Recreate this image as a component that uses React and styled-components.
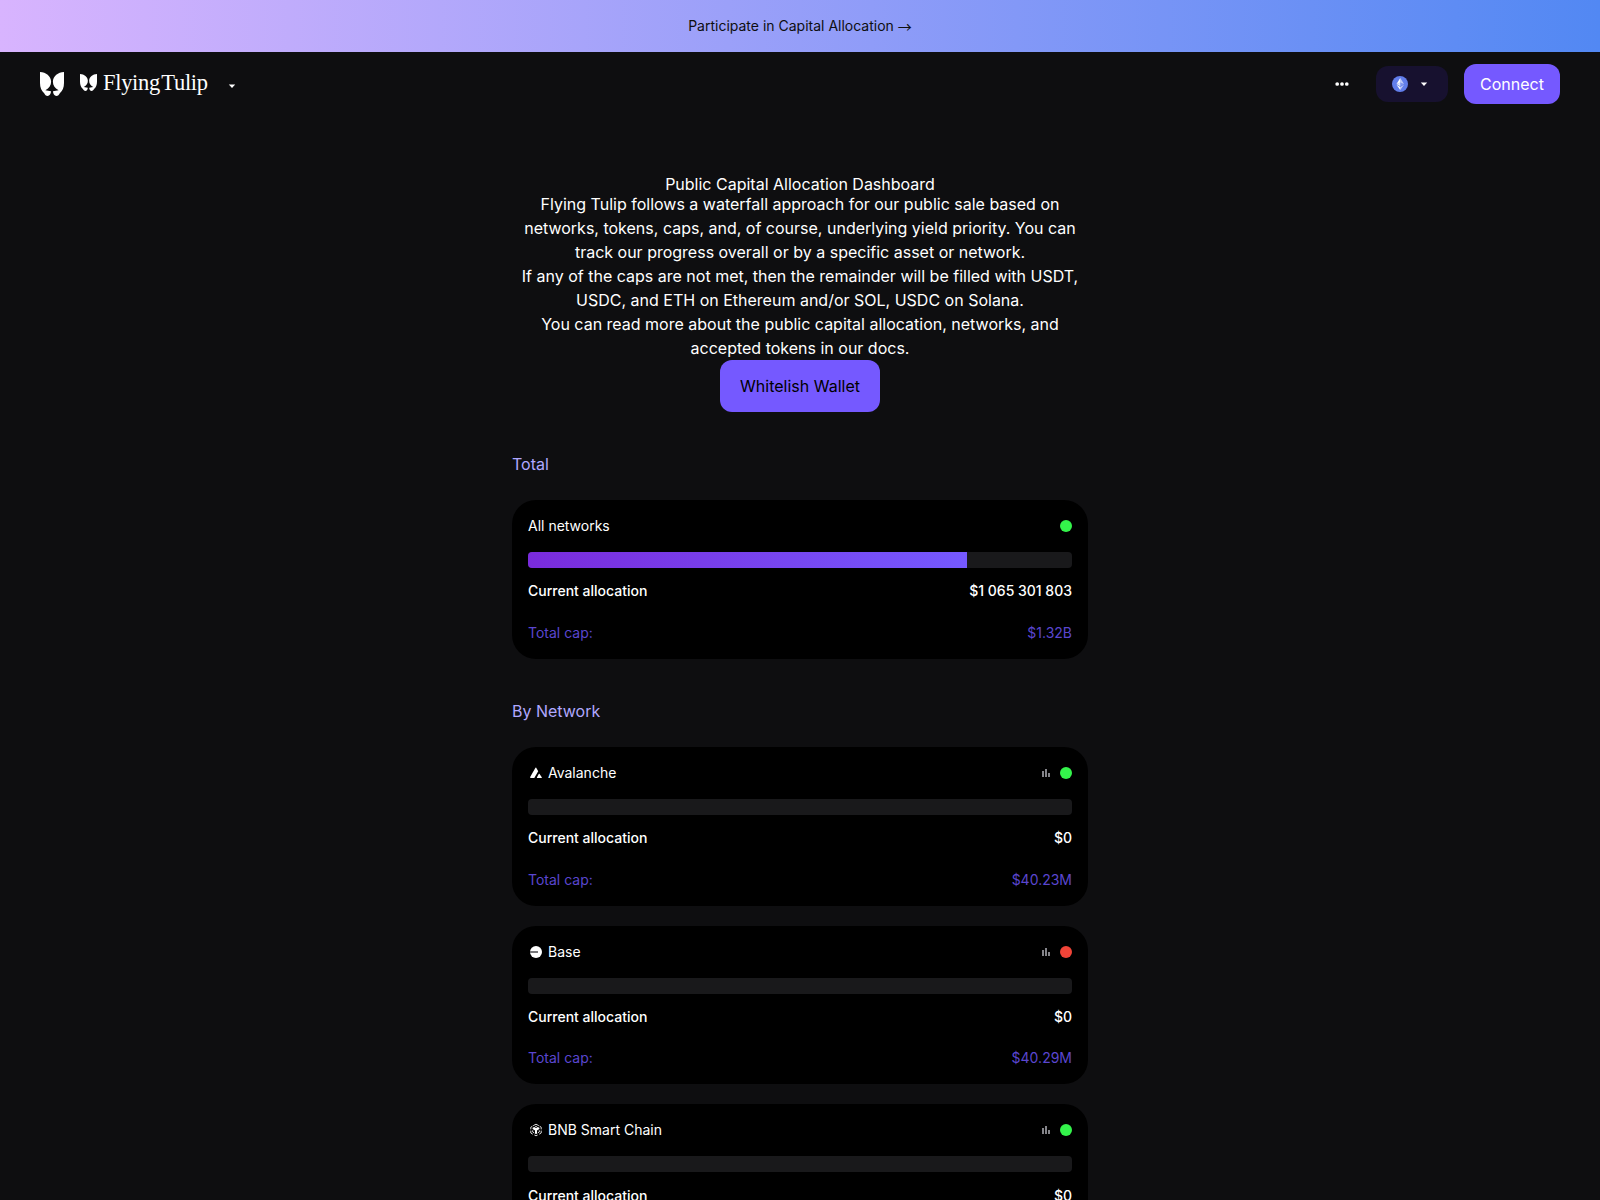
import React from "react";
import styled, { createGlobalStyle } from "styled-components";

const Global = createGlobalStyle`
  *, *::before, *::after { box-sizing: border-box; }
  html, body { margin: 0; padding: 0; background: #0e0e10; }
  body {
    height: 1200px;
    overflow: hidden;
    color: #fff;
    font-family: Inter, "Liberation Sans", sans-serif;
    font-size: 16px;
  }
  h1, h2, h3, p { margin: 0; font-weight: 400; font-size: inherit; }
  button { font: inherit; border: 0; padding: 0; background: none; color: inherit; }
  svg { display: block; flex: none; }
`;

const Banner = styled.a`
  display: flex;
  align-items: center;
  justify-content: center;
  gap: 4px;
  height: 52px;
  background: linear-gradient(90deg, #d8b4fe 0%, #5288f3 100%);
  color: #0e0e10;
  font-size: 14px;
  line-height: 20px;
`;

const Arrow = styled.span`
  font-family: "Noto Sans CJK JP", sans-serif;
`;

const Header = styled.header`
  display: flex;
  align-items: center;
  justify-content: space-between;
  height: 64px;
  padding: 0 40px;
`;

const Brand = styled.div`
  display: flex;
  align-items: center;
`;

const Wordmark = styled.div`
  display: flex;
  align-items: flex-start;
  height: 20px;
  margin: 0 17px 0 16px;
`;

const BrandName = styled.span`
  margin: -3px 0 0 6px;
  width: 106px;
  font-family: "Liberation Serif", serif;
  font-size: 22.5px;
  line-height: 24px;
  letter-spacing: -0.3px;
  word-spacing: -3.6px;
  white-space: nowrap;
`;

const BrandToggle = styled.button`
  padding-top: 3px;
`;

const Actions = styled.div`
  display: flex;
  align-items: center;
  gap: 16px;
`;

const MoreButton = styled.button`
  display: grid;
  place-items: center;
  width: 36px;
  height: 36px;
`;

const NetworkButton = styled.button`
  display: flex;
  align-items: center;
  gap: 10px;
  width: 72px;
  height: 36px;
  padding: 0 16px;
  border-radius: 12px;
  background: #17112f;
`;

const ConnectButton = styled.button`
  width: 96px;
  height: 40px;
  border-radius: 12px;
  background: #7559ff;
  line-height: 24px;
`;

const Main = styled.main`
  display: flex;
  flex-direction: column;
  width: 576px;
  margin: 0 auto;
  padding-top: 58px;
`;

const Hero = styled.section`
  display: flex;
  flex-direction: column;
  align-items: center;
  text-align: center;
`;

const Title = styled.h1`
  height: 18px;
  line-height: 20px;
`;

const Copy = styled.p`
  line-height: 24px;
`;

const WalletButton = styled.button`
  width: 160px;
  height: 52px;
  border-radius: 12px;
  background: #7559ff;
  color: #000;
`;

const Section = styled.section`
  display: flex;
  flex-direction: column;
  padding-top: ${(p) => p.$top}px;
`;

const SectionTitle = styled.h2`
  margin-bottom: 24px;
  color: #b0a8ff;
  line-height: 24px;
`;

const CardList = styled.div`
  display: flex;
  flex-direction: column;
  gap: 20px;
`;

const CardBox = styled.article`
  display: flex;
  flex-direction: column;
  height: 158.7px;
  padding: 16px;
  border-radius: 24px;
  background: #000;
  font-size: 14px;
  line-height: 20px;
`;

const Row = styled.div`
  display: flex;
  align-items: center;
  justify-content: space-between;
`;

const Label = styled.h3`
  display: flex;
  align-items: center;
  gap: 4px;
`;

const Status = styled.div`
  display: flex;
  align-items: center;
  gap: 6px;
`;

const Dot = styled.span`
  width: 12px;
  height: 12px;
  border-radius: 50%;
  background: ${(p) => (p.$open ? "#34f34b" : "#f04438")};
`;

const Track = styled.div`
  height: 16px;
  margin: 16px 0 13.2px;
  border-radius: 4px;
  overflow: hidden;
  background: #19191b;
`;

const Fill = styled.div`
  height: 100%;
  background: linear-gradient(90deg, #7a2bdc, #7559ff);
`;

const Allocation = styled(Row)`
  font-weight: 500;
`;

const Cap = styled(Row)`
  margin-top: 21.4px;
  color: #5a46cf;
`;

function TulipMark({ size }) {
  return (
    <svg width={size} height={size} viewBox="0 0 24 24" fill="#fff">
      <path d="M0 0C6 .3 10.900 4 11.100 9.500C11.100 13.500 9.300 16 5.400 18.300L11 19.300C11 21.700 9.600 24 7.600 24C6 24 4.900 22.800 4.200 21.300C1.500 19 0 15.500 0 11Z" />
      <path d="M24 0C18 .3 13.100 4 12.900 9.500C12.900 13.500 14.700 16 18.600 18.300L13 19.300C13 21.700 14.400 24 16.400 24C18 24 19.100 22.800 19.800 21.300C22.500 19 24 15.500 24 11Z" />
    </svg>
  );
}

function Caret() {
  return (
    <svg width="12" height="12" viewBox="0 0 12 12" fill="#fff">
      <path d="M2.800 4.500h6.400L6 7.900z" />
    </svg>
  );
}

function MoreIcon() {
  return (
    <svg width="16" height="16" viewBox="0 0 16 16" fill="#fff">
      <circle cx="3.200" cy="8" r="1.850" />
      <circle cx="8" cy="8" r="1.850" />
      <circle cx="12.800" cy="8" r="1.850" />
    </svg>
  );
}

function EthIcon() {
  return (
    <svg width="16" height="16" viewBox="0 0 32 32">
      <circle cx="16" cy="16" r="16" fill="#627eea" />
      <g fill="#fff">
        <path fillOpacity=".602" d="M16.498 4v8.870l7.497 3.350z" />
        <path d="M16.498 4L9 16.220l7.498-3.350z" />
        <path fillOpacity=".602" d="M16.498 21.968v6.027L24 17.616z" />
        <path d="M16.498 27.995v-6.028L9 17.616z" />
        <path fillOpacity=".2" d="M16.498 20.573l7.497-4.353-7.497-3.348z" />
        <path fillOpacity=".8" d="M9 16.220l7.498 4.353v-7.701z" />
      </g>
    </svg>
  );
}

function AvalancheIcon() {
  return (
    <svg width="16" height="16" viewBox="0 0 16 16" fill="#fff">
      <path d="M8.200 2.700L10.200 6.200L6.300 12.900H2.600Q1.900 12.800 2.200 12.100L7.300 2.900Q7.700 2.300 8.200 2.700Z" />
      <path d="M11.400 8.800L13.800 12.300Q14 12.800 13.500 12.900H9.200Q8.700 12.700 9 12.200L10.900 8.800Q11.150 8.500 11.400 8.800Z" />
    </svg>
  );
}

function BaseIcon() {
  return (
    <svg width="16" height="16" viewBox="0 0 16 16">
      <circle cx="8" cy="8" r="6" fill="#fff" />
      <path d="M2 7h8v2H2z" fill="#77777a" />
    </svg>
  );
}

function BnbIcon() {
  return (
    <svg width="16" height="16" viewBox="0 0 16 16">
      <path
        d="M5.200 3.700L8 2.200L10.800 3.700M2.800 7.400V5.200L4.400 4.200M13.200 7.400V5.200L11.600 4.200M2.800 8.600V11L4.800 12.200M13.200 8.600V11L11.200 12.200M6.400 13L8 13.800L9.600 13"
        fill="none"
        stroke="#fff"
        strokeOpacity=".85"
        strokeWidth="1"
      />
      <path
        d="M4.700 8.300V10L6.300 11M11.300 8.300V10L9.700 11"
        fill="none"
        stroke="#fff"
        strokeOpacity=".8"
        strokeWidth="1"
      />
      <path
        d="M4.600 5.700L6.200 4.900L8 5.900L9.800 4.900L11.400 5.700V7L9 8.400V11.600L8 12.200L7 11.600V8.400L4.600 7Z"
        fill="#fff"
      />
      <path d="M6.800 4.300L8 3.700L9.200 4.300L8 5Z" fill="#fff" />
    </svg>
  );
}

function ChartIcon() {
  return (
    <svg width="16" height="16" viewBox="0 0 16 16" fill="#85858a">
      <path d="M4 6h2v6H4zM7 4h2v8H7zM10 8h2v4h-2z" />
    </svg>
  );
}

const networks = [
  { name: "Avalanche", icon: <AvalancheIcon />, open: true, cap: "$40.23M" },
  { name: "Base", icon: <BaseIcon />, open: false, cap: "$40.29M" },
  { name: "BNB Smart Chain", icon: <BnbIcon />, open: true, cap: "$40.29M" },
];

function AllocationCard({ name, icon, open, current, cap, progress = 0, chart }) {
  return (
    <CardBox>
      <Row>
        <Label>
          {icon}
          {name}
        </Label>
        <Status>
          {chart && <ChartIcon />}
          <Dot $open={open} />
        </Status>
      </Row>
      <Track>
        <Fill style={{ width: `${progress}%` }} />
      </Track>
      <Allocation>
        <span>Current allocation</span>
        <span>{current}</span>
      </Allocation>
      <Cap>
        <span>Total cap:</span>
        <span>{cap}</span>
      </Cap>
    </CardBox>
  );
}

export default function App() {
  return (
    <>
      <Global />
      <Banner>
        Participate in Capital Allocation <Arrow>→</Arrow>
      </Banner>
      <Header>
        <Brand>
          <TulipMark size={24} />
          <Wordmark>
            <TulipMark size={17} />
            <BrandName>Flying Tulip</BrandName>
          </Wordmark>
          <BrandToggle>
            <Caret />
          </BrandToggle>
        </Brand>
        <Actions>
          <MoreButton>
            <MoreIcon />
          </MoreButton>
          <NetworkButton>
            <EthIcon />
            <Caret />
          </NetworkButton>
          <ConnectButton>Connect</ConnectButton>
        </Actions>
      </Header>
      <Main>
        <Hero>
          <Title>Public Capital Allocation Dashboard</Title>
          <Copy>
            Flying Tulip follows a waterfall approach for our public sale based on networks, tokens,
            caps, and, of course, underlying yield priority. You can track our progress overall or by
            a specific asset or network.
          </Copy>
          <Copy>
            If any of the caps are not met, then the remainder will be filled with USDT, USDC, and
            ETH on Ethereum and/or SOL, USDC on Solana.
          </Copy>
          <Copy>
            You can read more about the public capital allocation, networks, and accepted tokens in
            our docs.
          </Copy>
          <WalletButton>Whitelish Wallet</WalletButton>
        </Hero>
        <Section $top={40}>
          <SectionTitle>Total</SectionTitle>
          <AllocationCard
            name="All networks"
            open
            current="$1 065 301 803"
            cap="$1.32B"
            progress={80.76}
          />
        </Section>
        <Section $top={40.3}>
          <SectionTitle>By Network</SectionTitle>
          <CardList>
            {networks.map((n) => (
              <AllocationCard key={n.name} {...n} current="$0" chart />
            ))}
          </CardList>
        </Section>
      </Main>
    </>
  );
}
